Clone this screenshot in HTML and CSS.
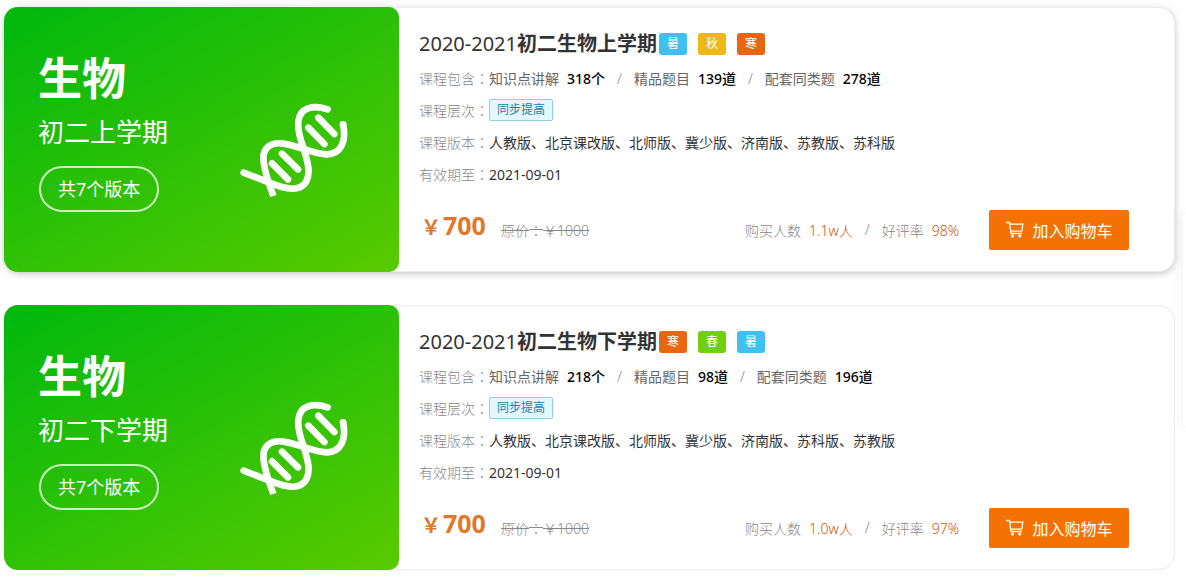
FILE: index.html
```html
<!DOCTYPE html>
<html lang="zh-CN">
<head>
    <meta charset="UTF-8">
    <meta name="viewport" content="width=device-width, initial-scale=1.0">
    <title>初二生物课程</title>
    <link rel="stylesheet" href="styles.css">
</head>
<body>
    <!-- shared icons -->
    <svg class="sprite" aria-hidden="true">
        <symbol id="icon-dna" viewBox="0 0 420 360">
            <g fill="none" stroke="currentColor" stroke-width="20">
                <path stroke-linecap="round" d="M305 58C260 44 222 52 217 94C213 130 229 160 236 184C244 216 256 246 240 276C222 305 184 300 130 278L53 248"/>
                <path d="M142 318C130 284 113 240 112 205C112 174 134 158 165 160C205 162 255 190 300 193C346 194 362 152 351 102"/>
                <path stroke-linecap="round" d="M351 104v-1M247 113L295 162M277 83L325 132M138 220L186 268M168 191L216 238"/>
            </g>
        </symbol>
        <symbol id="icon-cart" viewBox="0 0 20 20">
            <path fill="none" stroke="currentColor" stroke-width="1.300" d="M1 2.500h3.500l1.500 11h11M4.800 4.200h13l-1 7H5.700"/>
            <circle cx="7.500" cy="16" r="1.600" fill="currentColor"/>
            <circle cx="14.800" cy="16" r="1.600" fill="currentColor"/>
        </symbol>
    </svg>

    <main class="course-list">
        <article class="course active">
            <div class="cover">
                <div class="cover-text">
                    <div class="subject">生物</div>
                    <div class="term">初二上学期</div>
                    <div class="versions">共7个版本</div>
                </div>
                <svg class="dna" aria-hidden="true"><use href="#icon-dna"/></svg>
            </div>
            <div class="detail">
                <div class="title-row">
                    <h2><span>2020-2021</span>初二生物上学期</h2>
                    <div class="seasons">
                        <span class="season summer">暑</span>
                        <span class="season autumn">秋</span>
                        <span class="season winter">寒</span>
                    </div>
                </div>
                <div class="row">
                    <span class="label">课程包含<i lang="zh-TW">：</i></span>
                    <span class="item">知识点讲解<b>318个</b></span>
                    <span class="slash">/</span>
                    <span class="item">精品题目<b>139道</b></span>
                    <span class="slash">/</span>
                    <span class="item">配套同类题<b>278道</b></span>
                </div>
                <div class="row">
                    <span class="label">课程层次<i lang="zh-TW">：</i></span>
                    <span class="level">同步提高</span>
                </div>
                <div class="row">
                    <span class="label">课程版本<i lang="zh-TW">：</i></span>
                    <span>人教版、北京课改版、北师版、冀少版、济南版、苏教版、苏科版</span>
                </div>
                <div class="row">
                    <span class="label">有效期至<i lang="zh-TW">：</i></span>
                    <span>2021-09-01</span>
                </div>
                <div class="buy-row">
                    <span class="price"><small>￥</small>700</span>
                    <del>原价<i lang="zh-TW">：</i>￥1000</del>
                    <div class="stats">
                        <span>购买人数<em>1.1w人</em></span>
                        <span class="slash">/</span>
                        <span>好评率<em>98%</em></span>
                    </div>
                    <button type="button" class="add-cart">
                        <svg aria-hidden="true"><use href="#icon-cart"/></svg>加入购物车
                    </button>
                </div>
            </div>
        </article>

        <article class="course">
            <div class="cover">
                <div class="cover-text">
                    <div class="subject">生物</div>
                    <div class="term">初二下学期</div>
                    <div class="versions">共7个版本</div>
                </div>
                <svg class="dna" aria-hidden="true"><use href="#icon-dna"/></svg>
            </div>
            <div class="detail">
                <div class="title-row">
                    <h2><span>2020-2021</span>初二生物下学期</h2>
                    <div class="seasons">
                        <span class="season winter">寒</span>
                        <span class="season spring">春</span>
                        <span class="season summer">暑</span>
                    </div>
                </div>
                <div class="row">
                    <span class="label">课程包含<i lang="zh-TW">：</i></span>
                    <span class="item">知识点讲解<b>218个</b></span>
                    <span class="slash">/</span>
                    <span class="item">精品题目<b>98道</b></span>
                    <span class="slash">/</span>
                    <span class="item">配套同类题<b>196道</b></span>
                </div>
                <div class="row">
                    <span class="label">课程层次<i lang="zh-TW">：</i></span>
                    <span class="level">同步提高</span>
                </div>
                <div class="row">
                    <span class="label">课程版本<i lang="zh-TW">：</i></span>
                    <span>人教版、北京课改版、北师版、冀少版、济南版、苏科版、苏教版</span>
                </div>
                <div class="row">
                    <span class="label">有效期至<i lang="zh-TW">：</i></span>
                    <span>2021-09-01</span>
                </div>
                <div class="buy-row">
                    <span class="price"><small>￥</small>700</span>
                    <del>原价<i lang="zh-TW">：</i>￥1000</del>
                    <div class="stats">
                        <span>购买人数<em>1.0w人</em></span>
                        <span class="slash">/</span>
                        <span>好评率<em>97%</em></span>
                    </div>
                    <button type="button" class="add-cart">
                        <svg aria-hidden="true"><use href="#icon-cart"/></svg>加入购物车
                    </button>
                </div>
            </div>
        </article>
    </main>

    <!-- edge of the floating side bar -->
    <aside class="side-bar"></aside>
</body>
</html>
```
FILE: styles.css
```css
* {
    margin: 0;
    padding: 0;
    box-sizing: border-box;
}
body {
    background: #fff;
    color: #333;
    font-family: "Noto Sans", "Noto Sans CJK SC", sans-serif;
    font-size: 14px;
    overflow-x: hidden;
}
.sprite {
    display: none;
}
/* colon centred in its cell */
i {
    font-family: "Noto Sans CJK TC", sans-serif;
    font-style: normal;
    line-height: 1;
}
.course-list {
    display: flex;
    flex-direction: column;
    gap: 33px;
    padding: 7px 11px 14px 4px;
}
.course {
    display: flex;
    background: #fff;
    border: 1px solid #ececec;
    border-radius: 16px;
}
.course.active {
    box-shadow: 0 2px 7px rgba(0, 0, 0, 0.22);
}

/* green cover */
.cover {
    display: flex;
    justify-content: space-between;
    flex: 0 0 395px;
    margin: -1px 0 -1px -1px;
    padding: 42px 33px 0 34px;
    color: #fff;
    background: linear-gradient(150deg, #00b80e, #5aca00);
    border-radius: 14px 10px 10px 14px;
}
.subject {
    font-size: 44px;
    font-weight: bold;
    line-height: 58px;
}
.term {
    font-size: 26px;
    line-height: 50px;
}
.versions {
    display: inline-block;
    margin: 9px 0 0 1px;
    padding: 0 17px;
    font-size: 18px;
    line-height: 42px;
    border: 2px solid #c9f2bd;
    border-radius: 23px;
}
.dna {
    width: 140px;
    height: 120px;
    margin-top: 41px;
}

/* course info */
.detail {
    flex: 1;
    padding: 18px 45px 21px 20px;
}
.title-row {
    display: flex;
    align-items: center;
    gap: 2px;
    height: 36px;
}
h2 {
    font-size: 20px;
    line-height: 36px;
}
h2 span {
    font-weight: 400;
}
.seasons {
    display: flex;
    gap: 11px;
}
.season {
    width: 28px;
    color: #fff;
    font-size: 12px;
    line-height: 22px;
    text-align: center;
    border-radius: 3px;
}
.summer {
    background: #3fc0ee;
}
.autumn {
    background: #eeb711;
}
.winter {
    background: #e86612;
}
.spring {
    background: #6fd00f;
}
.row {
    display: flex;
    align-items: center;
    height: 32px;
}
.label {
    color: #888;
    font-weight: 300;
}
.item {
    color: #666;
}
.item b {
    margin-left: 8px;
    color: #000;
    font-weight: 500;
}
.slash {
    margin: 0 12px;
    color: #888;
    font-weight: 300;
}
.level {
    padding: 0 7px;
    color: #1683ad;
    background: #e3f7fd;
    font-size: 12px;
    line-height: 20px;
    border: 1px solid #8fcfe4;
    border-radius: 2px;
}

/* price and cart */
.buy-row {
    display: flex;
    align-items: center;
    height: 40px;
    margin-top: 20px;
    font-weight: 300;
}
.price {
    padding-bottom: 8px;
    color: #e0772b;
    font-size: 25px;
    font-weight: bold;
    line-height: 34px;
}
.price small {
    display: inline-block;
    width: 24px;
    font-size: 20px;
    text-align: center;
}
del {
    margin-left: 15px;
    color: #888;
}
.stats {
    display: flex;
    margin-left: auto;
    color: #888;
}
.stats em {
    margin-left: 8px;
    color: #c9560f;
    font-style: normal;
}
.add-cart {
    display: flex;
    align-items: center;
    justify-content: center;
    gap: 7px;
    width: 140px;
    height: 40px;
    margin-left: 30px;
    color: #fff;
    background: #f47203;
    font-family: inherit;
    font-size: 16px;
    border: none;
    border-radius: 2px;
    cursor: pointer;
}
.add-cart svg {
    width: 20px;
    height: 20px;
}

.side-bar {
    position: fixed;
    top: 214px;
    right: 0;
    width: 3px;
    height: 212px;
    background: #fff;
    border-radius: 3px 0 0 3px;
    box-shadow: 0 0 12px rgba(0, 0, 0, 0.15);
}
```
